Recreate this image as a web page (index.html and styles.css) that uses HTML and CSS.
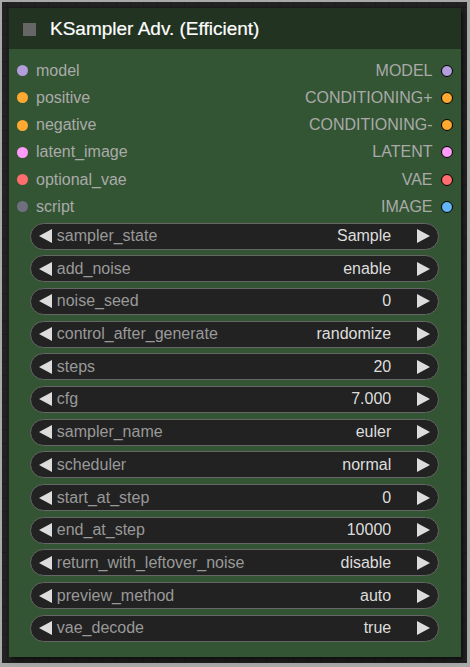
FILE: index.html
```html
<!DOCTYPE html>
<html>
<head>
<meta charset="utf-8">
<link rel="stylesheet" href="styles.css">
</head>
<body>
<div class="canvas">
  <div class="node">
    <div class="header">
      <span class="box"></span>
      <span class="title">KSampler Adv. (Efficient)</span>
    </div>
    <div class="body">
      <div class="slots">
        <div class="row"><div class="in"><span class="dot t-model"></span>model</div><div class="out">MODEL<span class="dot o t-model"></span></div></div>
        <div class="row"><div class="in"><span class="dot t-cond"></span>positive</div><div class="out">CONDITIONING+<span class="dot o t-cond"></span></div></div>
        <div class="row"><div class="in"><span class="dot t-cond"></span>negative</div><div class="out">CONDITIONING-<span class="dot o t-cond"></span></div></div>
        <div class="row"><div class="in"><span class="dot t-latent"></span>latent_image</div><div class="out">LATENT<span class="dot o t-latent"></span></div></div>
        <div class="row"><div class="in"><span class="dot t-vae"></span>optional_vae</div><div class="out">VAE<span class="dot o t-vae"></span></div></div>
        <div class="row"><div class="in"><span class="dot t-script"></span>script</div><div class="out">IMAGE<span class="dot o t-image"></span></div></div>
      </div>
      <div class="widgets">
        <div class="widget"><svg class="arr" viewBox="0 0 13 14"><polygon points="0,7 13,0 13,14"/></svg><span class="name">sampler_state</span><span class="val">Sample</span><svg class="arr" viewBox="0 0 13 14"><polygon points="13,7 0,0 0,14"/></svg></div>
        <div class="widget"><svg class="arr" viewBox="0 0 13 14"><polygon points="0,7 13,0 13,14"/></svg><span class="name">add_noise</span><span class="val">enable</span><svg class="arr" viewBox="0 0 13 14"><polygon points="13,7 0,0 0,14"/></svg></div>
        <div class="widget"><svg class="arr" viewBox="0 0 13 14"><polygon points="0,7 13,0 13,14"/></svg><span class="name">noise_seed</span><span class="val">0</span><svg class="arr" viewBox="0 0 13 14"><polygon points="13,7 0,0 0,14"/></svg></div>
        <div class="widget"><svg class="arr" viewBox="0 0 13 14"><polygon points="0,7 13,0 13,14"/></svg><span class="name">control_after_generate</span><span class="val">randomize</span><svg class="arr" viewBox="0 0 13 14"><polygon points="13,7 0,0 0,14"/></svg></div>
        <div class="widget"><svg class="arr" viewBox="0 0 13 14"><polygon points="0,7 13,0 13,14"/></svg><span class="name">steps</span><span class="val">20</span><svg class="arr" viewBox="0 0 13 14"><polygon points="13,7 0,0 0,14"/></svg></div>
        <div class="widget"><svg class="arr" viewBox="0 0 13 14"><polygon points="0,7 13,0 13,14"/></svg><span class="name">cfg</span><span class="val">7.000</span><svg class="arr" viewBox="0 0 13 14"><polygon points="13,7 0,0 0,14"/></svg></div>
        <div class="widget"><svg class="arr" viewBox="0 0 13 14"><polygon points="0,7 13,0 13,14"/></svg><span class="name">sampler_name</span><span class="val">euler</span><svg class="arr" viewBox="0 0 13 14"><polygon points="13,7 0,0 0,14"/></svg></div>
        <div class="widget"><svg class="arr" viewBox="0 0 13 14"><polygon points="0,7 13,0 13,14"/></svg><span class="name">scheduler</span><span class="val">normal</span><svg class="arr" viewBox="0 0 13 14"><polygon points="13,7 0,0 0,14"/></svg></div>
        <div class="widget"><svg class="arr" viewBox="0 0 13 14"><polygon points="0,7 13,0 13,14"/></svg><span class="name">start_at_step</span><span class="val">0</span><svg class="arr" viewBox="0 0 13 14"><polygon points="13,7 0,0 0,14"/></svg></div>
        <div class="widget"><svg class="arr" viewBox="0 0 13 14"><polygon points="0,7 13,0 13,14"/></svg><span class="name">end_at_step</span><span class="val">10000</span><svg class="arr" viewBox="0 0 13 14"><polygon points="13,7 0,0 0,14"/></svg></div>
        <div class="widget"><svg class="arr" viewBox="0 0 13 14"><polygon points="0,7 13,0 13,14"/></svg><span class="name">return_with_leftover_noise</span><span class="val">disable</span><svg class="arr" viewBox="0 0 13 14"><polygon points="13,7 0,0 0,14"/></svg></div>
        <div class="widget"><svg class="arr" viewBox="0 0 13 14"><polygon points="0,7 13,0 13,14"/></svg><span class="name">preview_method</span><span class="val">auto</span><svg class="arr" viewBox="0 0 13 14"><polygon points="13,7 0,0 0,14"/></svg></div>
        <div class="widget"><svg class="arr" viewBox="0 0 13 14"><polygon points="0,7 13,0 13,14"/></svg><span class="name">vae_decode</span><span class="val">true</span><svg class="arr" viewBox="0 0 13 14"><polygon points="13,7 0,0 0,14"/></svg></div>
      </div>
    </div>
  </div>
</div>
</body>
</html>
```
FILE: styles.css
```css
html, body {
  margin: 0;
  padding: 0;
  background: #a9a9a9;
}
body {
  width: 470px;
  height: 667px;
  overflow: hidden;
  font-family: "Liberation Sans", Arial, sans-serif;
}
.canvas {
  margin: 2px 3px 0 2px;
  height: 661px;
  background-color: #222;
  background-image:
    linear-gradient(to right, #1c1c1c 1px, transparent 1px),
    linear-gradient(to bottom, #1c1c1c 1px, transparent 1px);
  background-size: 13.625px 13.625px;
  background-position: 5px 5px;
  padding: 6px 0 0 7px;
  box-sizing: border-box;
}
.node {
  width: 452px;
  height: 649px;
  background: #335533;
  box-shadow: 2px 3px 4px rgba(0, 0, 0, 0.55);
  display: flex;
  flex-direction: column;
}
.header {
  height: 41px;
  background: #223322;
  display: flex;
  align-items: center;
  padding-left: 14px;
  flex-shrink: 0;
}
.box {
  width: 13px;
  height: 13px;
  background: #666;
  margin-right: 14px;
  margin-top: 1px;
}
.title {
  color: #fff;
  font-size: 19px;
  -webkit-text-stroke: 0.2px #fff;
}
.body {
  flex: 1;
  padding-top: 8px;
}
.slots {
  padding: 0 8.5px 0 8px;
}
.row {
  height: 27.25px;
  display: flex;
  justify-content: space-between;
  align-items: center;
  color: #aaa;
  font-size: 16px;
}
.in, .out {
  display: flex;
  align-items: center;
}
.dot {
  width: 11px;
  height: 11px;
  border-radius: 50%;
  display: inline-block;
  margin-right: 8px;
}
.dot.o {
  width: 10px;
  height: 10px;
  border: 1px solid #000;
  margin-right: 0;
  margin-left: 8px;
}
.t-model { background: #b39ddb; }
.t-cond { background: #ffa931; }
.t-latent { background: #ff9cf9; }
.t-vae { background: #ff6e6e; }
.t-script { background: #6f6f80; }
.t-image { background: #64b5f6; }
.widgets {
  margin-top: 2px;
  padding-left: 21px;
  display: flex;
  flex-direction: column;
  gap: 5.7px;
}
.widget {
  width: 409px;
  height: 27px;
  box-sizing: border-box;
  border: 1px solid #666;
  border-radius: 14px;
  background: #222;
  display: flex;
  align-items: center;
  padding: 0 7.8px;
  font-size: 16px;
}
.arr {
  width: 13px;
  height: 14px;
  fill: #ddd;
  flex-shrink: 0;
}
.name {
  color: #999;
  margin-left: 5px;
  flex: 1;
}
.val {
  color: #ddd;
  margin-right: 26px;
}
```
